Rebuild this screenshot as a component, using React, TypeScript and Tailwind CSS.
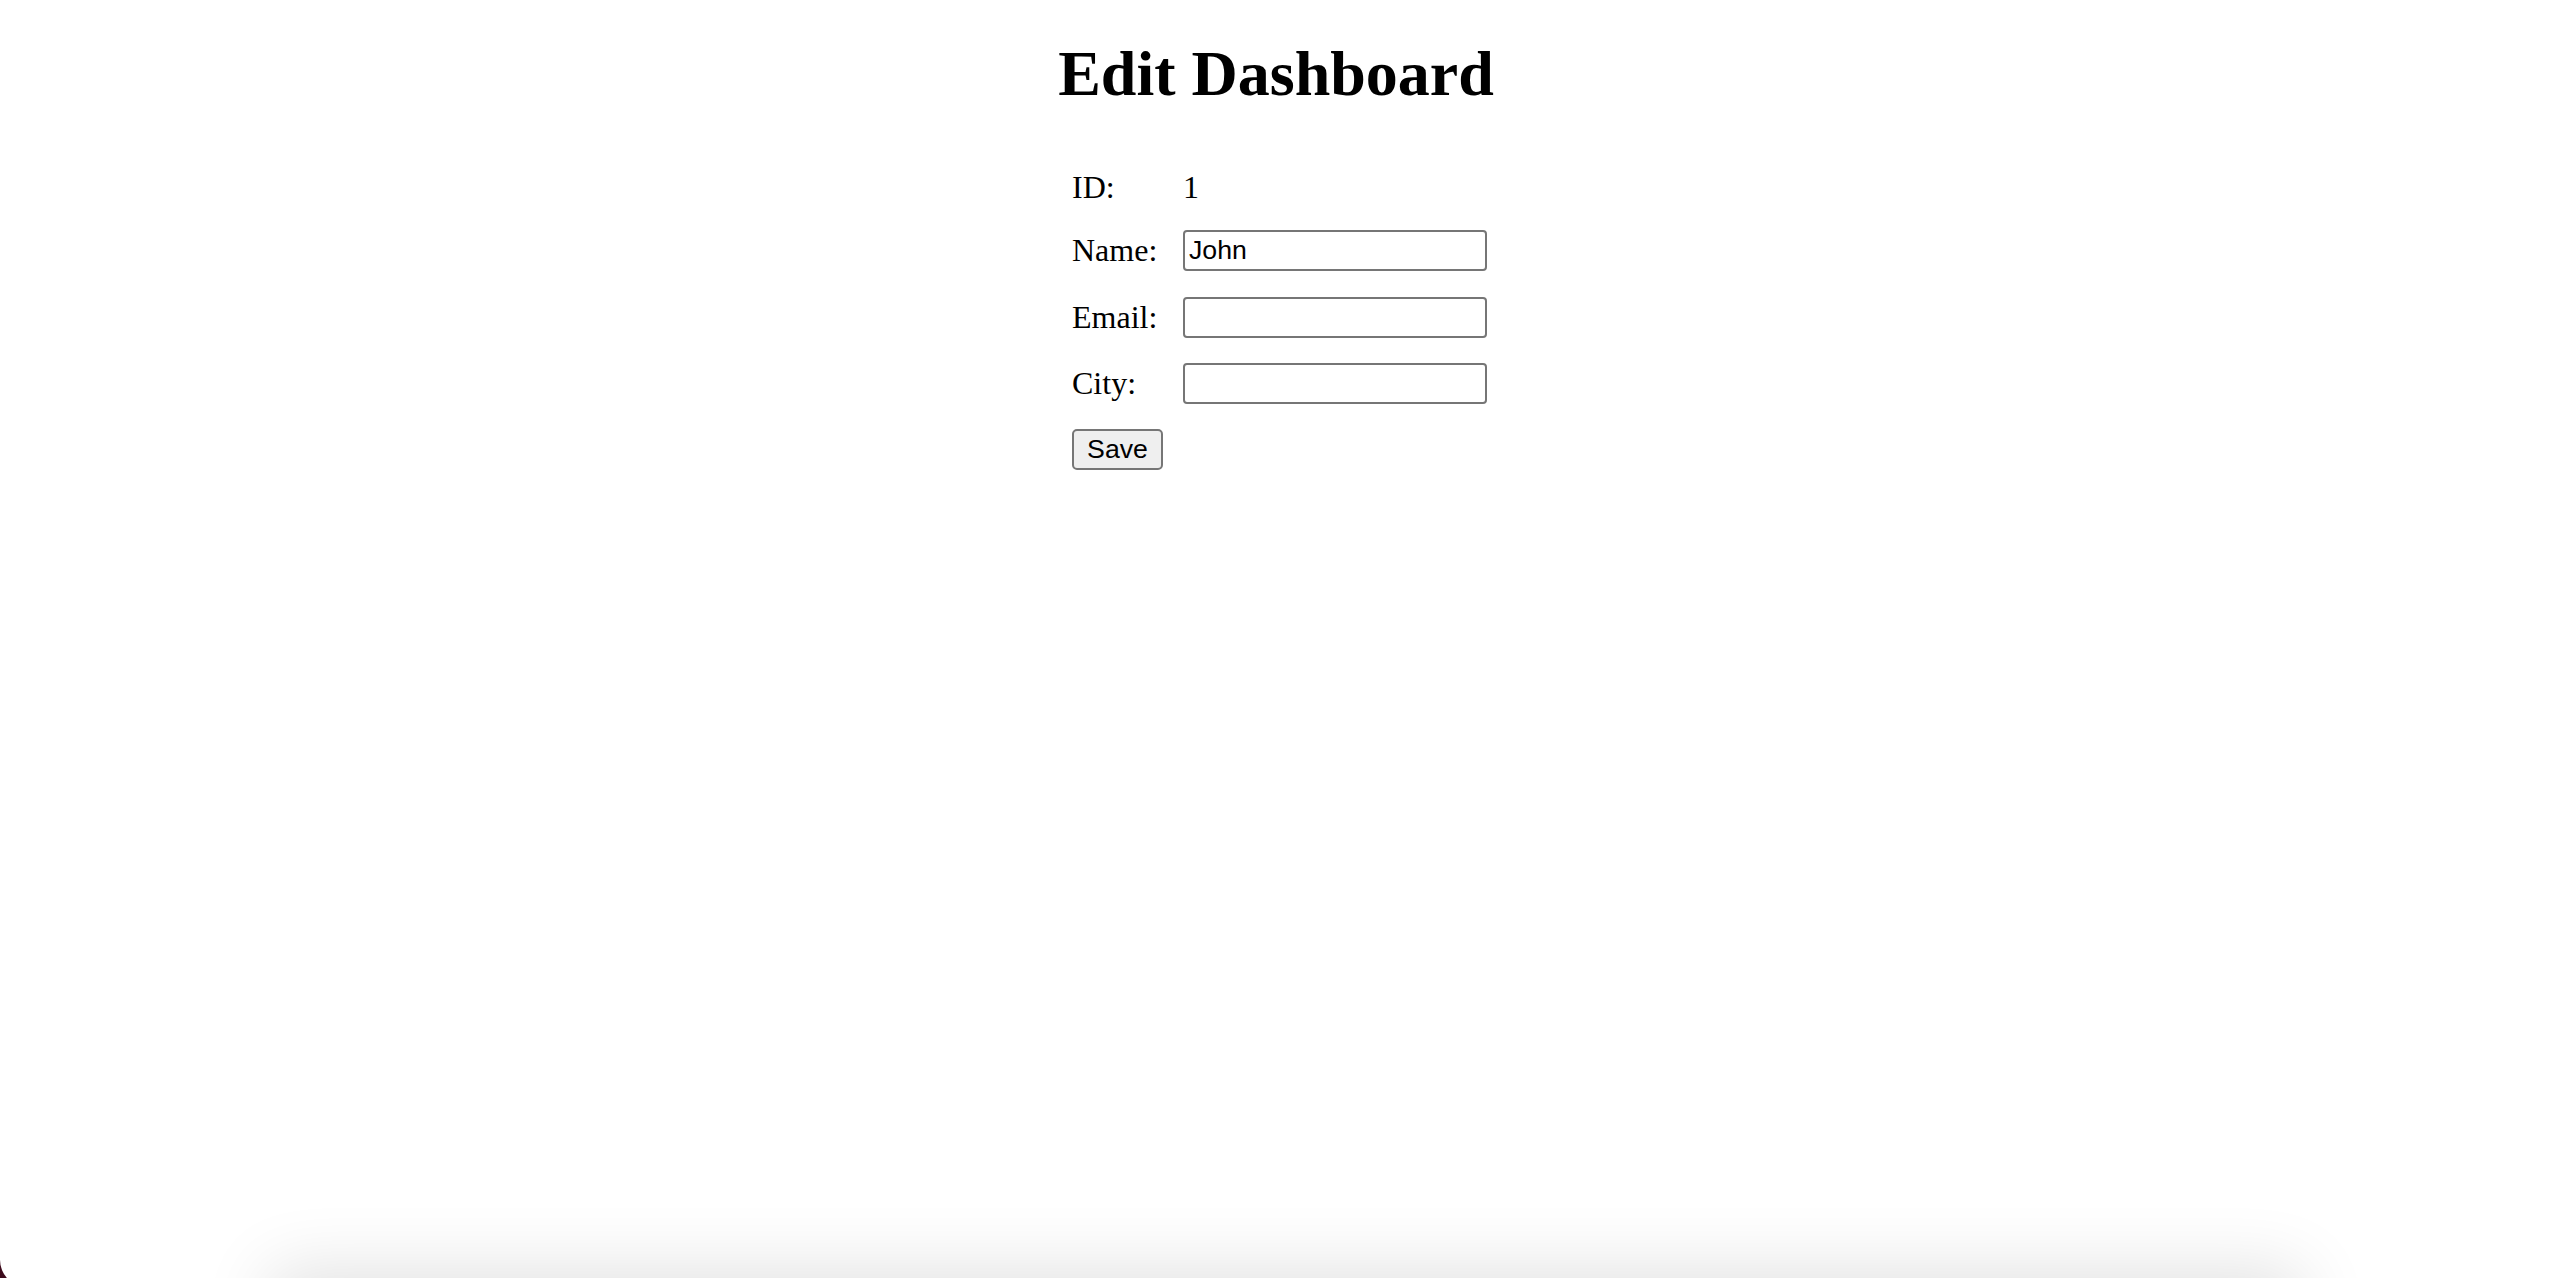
import React from 'react';

const fields = [
  { label: 'Name:', value: 'John', gap: 'mt-[24px]' },
  { label: 'Email:', value: '', gap: 'mt-[26px]' },
  { label: 'City:', value: '', gap: 'mt-[25px]' },
];

export default function App() {
  return (
    <div className="h-[1278px] w-full overflow-hidden bg-[#3d0b1c]">
      <div className="relative h-[1287px] w-full overflow-hidden rounded-bl-[27px] bg-white text-black font-['Liberation_Serif',serif]">
        {/* Title */}
        <h1 className="mt-[37px] text-center text-[64px] font-bold leading-[73.6px]">Edit Dashboard</h1>

        {/* Form */}
        <div className="mx-auto mt-[58px] w-[408px]">
          <div className="flex h-[37px] items-start text-[32px] leading-[36.8px]">
            <span className="w-[111px] shrink-0">ID:</span>
            <span>1</span>
          </div>

          {fields.map((f) => (
            <div key={f.label} className={`${f.gap} flex h-[41px] items-center text-[32px] leading-[36.8px]`}>
              <label className="w-[111px] shrink-0">{f.label}</label>
              <input
                type="text"
                defaultValue={f.value}
                className="h-[41px] w-[304px] shrink-0 rounded-[4px] border-2 border-[#767676] bg-white px-[4px] py-[2px] font-['Liberation_Sans',Arial,sans-serif] text-[26.67px] leading-normal text-black outline-none"
              />
            </div>
          ))}

          <button
            type="button"
            className="mt-[25px] flex h-[41px] w-[91px] items-center justify-center rounded-[5px] border-2 border-[#767676] bg-[#efefef] font-['Liberation_Sans',Arial,sans-serif] text-[26.67px] leading-none text-black"
          >
            Save
          </button>
        </div>

        {/* shadow cast from below the window */}
        <div className="absolute left-[300px] right-[280px] top-[1300px] h-[100px] bg-black/10 shadow-[0_0_70px_30px_rgba(0,0,0,0.12)]" />
      </div>
    </div>
  );
}
